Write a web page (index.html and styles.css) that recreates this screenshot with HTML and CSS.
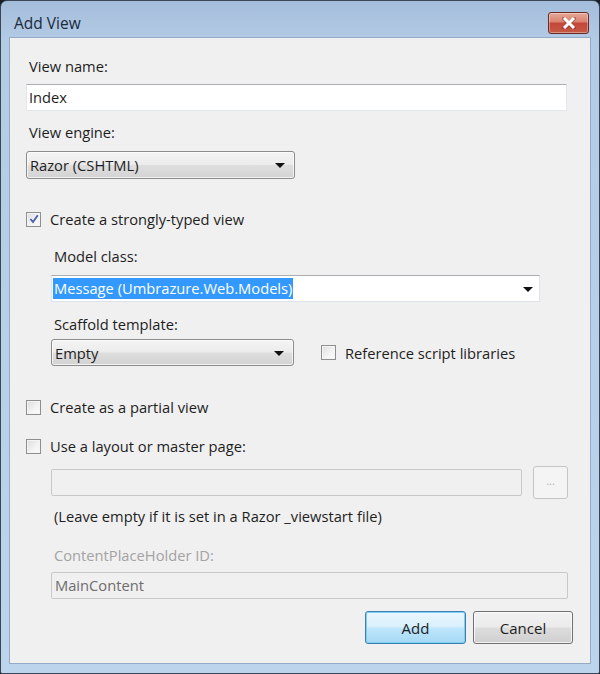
FILE: index.html
```html
<!DOCTYPE html>
<html lang="en">
<head>
  <meta charset="UTF-8">
  <title>Add View</title>
  <link rel="stylesheet" href="styles.css">
</head>
<body>
  <div class="window">
    <div class="titlebar">
      <span class="title">Add View</span>
      <button class="close-btn" aria-label="Close">
        <svg width="14" height="12" viewBox="0 0 14 12">
          <path d="M2 1 L12 11 M12 1 L2 11" stroke="#5a1a14" stroke-width="4" stroke-linecap="square" opacity="0.35" transform="translate(0,0.6)"/>
          <path d="M2 1 L12 11 M12 1 L2 11" stroke="#fff" stroke-width="3"/>
        </svg>
      </button>
    </div>

    <div class="client">
      <div class="label first">View name:</div>
      <div class="textbox wide">Index</div>

      <div class="label gap-11">View engine:</div>
      <div class="dropdown engine">
        <span>Razor (CSHTML)</span>
        <span class="arrow"></span>
      </div>

      <label class="check-row gap-30">
        <span class="checkbox checked">
          <svg width="10" height="10" viewBox="0 0 10 10"><path d="M1.5 5 L4 8 L8.8 1.2" fill="none" stroke="#4b5eac" stroke-width="1.8"/></svg>
        </span>
        Create a strongly-typed view
      </label>

      <div class="indent">
        <div class="label gap-17">Model class:</div>
        <div class="combo model">
          <span class="selected">Message (Umbrazure.Web.Models)</span>
          <span class="arrow"></span>
        </div>

        <div class="label gap-12">Scaffold template:</div>
        <div class="scaffold-row">
          <div class="dropdown scaffold">
            <span>Empty</span>
            <span class="arrow"></span>
          </div>
          <label class="check-row inline">
            <span class="checkbox"></span>
            Reference script libraries
          </label>
        </div>
      </div>

      <label class="check-row gap-31">
        <span class="checkbox"></span>
        Create as a partial view
      </label>

      <label class="check-row gap-19">
        <span class="checkbox"></span>
        Use a layout or master page:
      </label>

      <div class="indent">
        <div class="layout-row">
          <div class="textbox disabled layout"></div>
          <button class="browse-btn">...</button>
        </div>
        <div class="label gap-7">(Leave empty if it is set in a Razor _viewstart file)</div>
        <div class="label muted gap-19">ContentPlaceHolder ID:</div>
        <div class="textbox disabled placeholder-id">MainContent</div>
      </div>

      <div class="buttons">
        <button class="btn default">Add</button>
        <button class="btn">Cancel</button>
      </div>
    </div>
  </div>
</body>
</html>
```

FILE: styles.css
```css
html, body {
  margin: 0;
  padding: 0;
  background: #1b1f24;
}

body {
  font-family: "Segoe UI", "Open Sans", sans-serif;
  font-size: 14.7px;
  color: #1e1e1e;
}

/* Window frame */
.window {
  width: 600px;
  height: 674px;
  box-sizing: border-box;
  border: 1px solid #3a4656;
  border-radius: 7px 7px 2px 2px;
  background: linear-gradient(180deg, #a4bddb 0%, #b3cbe5 40px, #bcd4ec 100%);
  padding: 0 8px 9px 8px;
  display: flex;
  flex-direction: column;
}

.titlebar {
  height: 36px;
  display: flex;
  align-items: flex-start;
  justify-content: space-between;
}

.title {
  font-size: 15.5px;
  color: #1b2a3c;
  margin: 11px 0 0 5px;
}

.close-btn {
  width: 41px;
  height: 22px;
  margin: 11px 2px 0 0;
  padding: 0;
  border: 1px solid #6a2a24;
  border-radius: 3px;
  background: linear-gradient(180deg, #e7a897 0%, #d9826f 45%, #c2473a 50%, #c75a45 100%);
  box-shadow: inset 0 0 0 1px rgba(255, 255, 255, 0.35);
  display: flex;
  align-items: center;
  justify-content: center;
}

/* Client area */
.client {
  flex: 1;
  background: #f0f0f0;
  border: 1px solid #93abc6;
  padding: 18px 0 0 16px;
  display: flex;
  flex-direction: column;
  align-items: flex-start;
}

.label {
  line-height: 20px;
  height: 20px;
  padding-left: 3px;
  white-space: nowrap;
}

.label.muted {
  color: #a3a3a3;
}

.first { margin-top: 0; margin-bottom: 8px; }
.gap-7 { margin-top: 7px; }
.gap-11 { margin-top: 11px; margin-bottom: 9px; }
.gap-12 { margin-top: 12px; margin-bottom: 5px; }
.gap-17 { margin-top: 17px; margin-bottom: 9px; }
.gap-19 { margin-top: 19px; }
.gap-30 { margin-top: 30px; }
.gap-31 { margin-top: 31px; }

.indent {
  padding-left: 25px;
  display: flex;
  flex-direction: column;
  align-items: flex-start;
}

/* Text boxes */
.textbox {
  box-sizing: border-box;
  height: 27px;
  line-height: 25px;
  padding-left: 2px;
  background: #fff;
  border: 1px solid #e2e7ee;
  border-top-color: #abadb3;
}

.textbox.wide { width: 541px; }

.textbox.disabled {
  background: #f0f0f0;
  border: 1px solid #c9c9c9;
  color: #6d6d6d;
  border-radius: 2px;
}

.textbox.layout { width: 471px; }
.textbox.placeholder-id { width: 517px; margin-top: 7px; padding-left: 3px; }

/* Combo boxes */
.dropdown {
  box-sizing: border-box;
  height: 28px;
  border: 1px solid #8c8c8c;
  border-radius: 3px;
  background: linear-gradient(180deg, #f4f4f4 0%, #ececec 48%, #dedede 52%, #d3d3d3 100%);
  box-shadow: inset 0 0 0 1px rgba(255, 255, 255, 0.7);
  display: flex;
  align-items: center;
  justify-content: space-between;
  padding: 0 9px 0 3px;
}

.dropdown.engine { width: 269px; }
.dropdown.scaffold { width: 243px; height: 27px; }

.arrow {
  width: 0;
  height: 0;
  border-left: 5px solid transparent;
  border-right: 5px solid transparent;
  border-top: 5px solid #111;
  margin-top: 1px;
}

.combo {
  box-sizing: border-box;
  height: 27px;
  background: #fff;
  border: 1px solid #dde3ea;
  border-top-color: #abadb3;
  display: flex;
  align-items: center;
  justify-content: space-between;
  padding: 0 6px 0 1px;
}

.combo.model { width: 489px; }

.selected {
  background: #3399ff;
  color: #fff;
  line-height: 21px;
  padding: 0 1px;
}

/* Checkboxes */
.check-row {
  display: flex;
  align-items: center;
  height: 20px;
  white-space: nowrap;
}

.checkbox {
  box-sizing: border-box;
  width: 15px;
  height: 15px;
  margin-right: 9px;
  border: 1px solid #8e8f8f;
  background: linear-gradient(135deg, #dcdcdc 0%, #f4f4f4 60%, #fbfbfb 100%);
  box-shadow: inset 0 0 0 1px #f4f4f4;
  display: flex;
  align-items: center;
  justify-content: center;
}

.scaffold-row {
  display: flex;
  align-items: center;
}

.check-row.inline { margin-left: 27px; }

/* Layout page row */
.layout-row {
  margin-top: 10px;
  display: flex;
  align-items: center;
}

.browse-btn {
  box-sizing: border-box;
  width: 35px;
  height: 33px;
  margin-left: 11px;
  border: 1px solid #c5c5c5;
  border-radius: 3px;
  background: #f4f4f4;
  color: #b0b0b0;
  font-family: inherit;
  font-size: 11px;
  padding: 0 0 4px 0;
}

/* Dialog buttons */
.buttons {
  align-self: stretch;
  display: flex;
  justify-content: flex-end;
  gap: 7px;
  margin-top: 12px;
  padding-right: 17px;
}

.btn {
  box-sizing: border-box;
  width: 100px;
  height: 33px;
  border: 1px solid #707070;
  border-radius: 3px;
  background: linear-gradient(180deg, #f2f2f2 0%, #ebebeb 48%, #dddddd 52%, #cfcfcf 100%);
  box-shadow: inset 0 0 0 1px rgba(255, 255, 255, 0.75);
  font-family: inherit;
  font-size: 15px;
  color: #1e1e1e;
}

.btn.default {
  width: 101px;
  border-color: #3c7fb1;
  background: linear-gradient(180deg, #eaf6fd 0%, #d9f0fc 48%, #bee6fd 52%, #a7d9f5 100%);
  box-shadow: inset 0 0 0 1px #7fd0f5;
}
```
